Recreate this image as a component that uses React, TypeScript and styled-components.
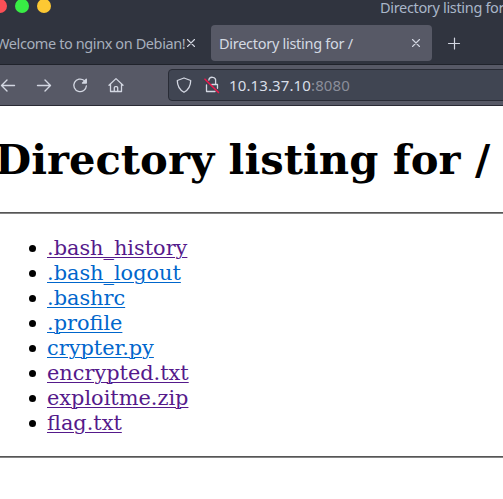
import React from "react";
import styled, { createGlobalStyle } from "styled-components";

const Global = createGlobalStyle`
  html, body { margin: 0; padding: 0; background: #fff; }
  body { overflow: hidden; }
  *, *::before, *::after { box-sizing: border-box; }
`;

const Window = styled.div`
  width: 503px;
  height: 499px;
  overflow: hidden;
  display: flex;
  flex-direction: column;
  background: #fff;
`;

const Chrome = styled.header`
  flex: none;
  font-family: "Noto Sans", sans-serif;
  font-size: 14.5px;
  letter-spacing: -0.33px;
  white-space: nowrap;
  color: #b0b8c6;
  background: #30343f;
`;

const TitleBar = styled.div`
  height: 25px;
  display: flex;
  align-items: flex-start;
`;

const Lights = styled.div`
  flex: none;
  display: flex;
  gap: 8px;
  width: 380px;
  margin-left: -7px;
  margin-right: 7px;
`;

const Light = styled.span<{ $color: string }>`
  width: 14px;
  height: 14px;
  margin-top: -1px;
  border-radius: 50%;
  background: ${(p) => p.$color};
`;

const WindowTitle = styled.span`
  line-height: 20px;
  margin-top: -3px;
  color: #a9b6c8;
`;

const TabStrip = styled.div`
  height: 40px;
  display: flex;
  align-items: flex-start;
  border-bottom: 1px solid #20232b;
`;

const Tab = styled.div<{ $active?: boolean }>`
  flex: none;
  width: ${(p) => (p.$active ? 221 : 211)}px;
  height: 36px;
  padding: ${(p) => (p.$active ? "0 10px 0 8px" : "0 14px 0 0")};
  display: flex;
  align-items: center;
  justify-content: space-between;
  border-radius: 4px;
  color: ${(p) => (p.$active ? "#d3dae3" : "#a7afbc")};
  background: ${(p) => (p.$active ? "#575966" : "transparent")};
`;

const TabLabel = styled.span<{ $shift?: number }>`
  line-height: 20px;
  margin-left: ${(p) => p.$shift ?? 0}px;
  letter-spacing: ${(p) => (p.$shift ? -0.4 : -0.28)}px;
`;

const NewTab = styled.span`
  height: 36px;
  padding-left: 15px;
  display: flex;
  align-items: center;
`;

const Toolbar = styled.div`
  height: 41px;
  display: flex;
  align-items: center;
  background: #575966;
  border-bottom: 1px solid #292a34;
`;

const NavButtons = styled.div`
  width: 168px;
  flex: none;
  display: flex;
  gap: 18px;
  margin-left: -1px;
  margin-right: 1px;
`;

const AddressBar = styled.div`
  width: 350px;
  height: 32px;
  flex: none;
  display: flex;
  align-items: center;
  padding-left: 6px;
  border: 1px solid #292c36;
  border-radius: 4px;
  background: #404552;
  color: #d8dee8;
  font-size: 15px;
  letter-spacing: 0.12px;
`;

const Address = styled.span`
  line-height: 20px;
  margin-left: 8px;
`;

const Port = styled.span`
  color: #8b8e9a;
`;

const Glyph = styled.svg<{ $gap?: number; $weight?: number }>`
  flex: none;
  display: block;
  margin-left: ${(p) => p.$gap ?? 0}px;
  fill: none;
  stroke: #d3d7e2;
  stroke-width: ${(p) => p.$weight ?? 1.4};
  stroke-linecap: round;
  stroke-linejoin: round;
`;

const Slash = styled.path`
  stroke: #ed174b;
  stroke-width: 1.6;
`;

const Page = styled.main`
  flex: 1;
  font-family: "DejaVu Serif", serif;
  font-size: 20.85px;
  color: #000;
`;

const Heading = styled.h1`
  margin: 29px 0 28px -5px;
  font-size: 41.7px;
  line-height: 49px;
  font-weight: 700;
  white-space: nowrap;
`;

const Rule = styled.hr`
  margin: 0;
  height: 2px;
  border: 0;
  background: linear-gradient(#555 50%, #858585 50%);
`;

const Listing = styled.ul`
  margin: 22px 0 20px;
  padding: 0 0 0 28px;
  list-style: none;
`;

const Entry = styled.li`
  height: 25px;
  line-height: 25px;
  display: flex;
  align-items: center;

  &::before {
    content: "";
    width: 7.5px;
    height: 7.5px;
    margin: 0 11px 0 0.5px;
    border-radius: 50%;
    background: #000;
  }
`;

const FileLink = styled.a<{ $visited: boolean }>`
  color: ${(p) => (p.$visited ? "#551a8b" : "#0066cc")};
  text-decoration: underline;
  text-decoration-thickness: 1px;
  text-underline-offset: 2px;
  text-decoration-skip-ink: auto;
`;

const files = [
  { name: ".bash_history", visited: true },
  { name: ".bash_logout", visited: false },
  { name: ".bashrc", visited: false },
  { name: ".profile", visited: false },
  { name: "crypter.py", visited: false },
  { name: "encrypted.txt", visited: true },
  { name: "exploitme.zip", visited: true },
  { name: "flag.txt", visited: true },
];

const Close = () => (
  <Glyph width="12" height="12" viewBox="0 0 12 12" $weight={1.1}>
    <path d="M2.5 2.5 9.5 9.5M9.5 2.5 2.5 9.5" />
  </Glyph>
);

export default function App() {
  return (
    <>
      <Global />
      <Window>
        <Chrome>
          <TitleBar>
            <Lights>
              <Light $color="#fc4f56" />
              <Light $color="#38ed45" />
              <Light $color="#fdc833" />
            </Lights>
            <WindowTitle>Directory listing for /</WindowTitle>
          </TitleBar>
          <TabStrip>
            <Tab>
              <TabLabel $shift={-4}>Welcome to nginx on Debian!</TabLabel>
              <Close />
            </Tab>
            <Tab $active>
              <TabLabel>Directory listing for /</TabLabel>
              <Close />
            </Tab>
            <NewTab>
              <Glyph width="14" height="14" viewBox="0 0 14 14" $weight={1.2}>
                <path d="M1.5 7.5h11M7.5 2v11" />
              </Glyph>
            </NewTab>
          </TabStrip>
          <Toolbar>
            <NavButtons>
              <Glyph width="18" height="18" viewBox="0 0 18 18">
                <path d="M15.5 9.5h-13M8 4 2.5 9.5 8 15" />
              </Glyph>
              <Glyph width="18" height="18" viewBox="0 0 18 18">
                <path d="M2.5 9.5h13M10 4l5.5 5.5L10 15" />
              </Glyph>
              <Glyph width="18" height="18" viewBox="0 0 18 18" $weight={1.3}>
                <path d="M13.2 4.6A6.3 6.3 0 1 0 15.4 9.8" />
                <path d="M15.3 3.2v3.9H11.4z" fill="#d3d7e2" />
              </Glyph>
              <Glyph width="18" height="18" viewBox="0 0 18 18" $weight={1.3}>
                <path d="M2 9.2 9 2.6l7 6.6M3.5 8.2v7.3h11V8.2M7.3 15.2v-3.5q0-1 1-1h1.4q1 0 1 1v3.5" />
              </Glyph>
            </NavButtons>
            <AddressBar>
              <Glyph width="18" height="18" viewBox="0 0 18 18" $weight={1.3}>
                <path d="M9 2 15.7 4.5C15.7 9.5 14 13.5 9 16.3 4 13.5 2.3 9.5 2.3 4.5Z" />
              </Glyph>
              <Glyph width="18" height="18" viewBox="0 0 18 18" $gap={10} $weight={1.3}>
                <path d="M5.8 4.2a3.4 3.4 0 0 1 6.8 1V8M8.8 8.5h5.7v3.8M3.5 9v6.5H12" />
                <Slash d="M2 3.2 15.5 16.5" />
              </Glyph>
              <Address>
                10.13.37.10<Port>:8080</Port>
              </Address>
            </AddressBar>
          </Toolbar>
        </Chrome>
        <Page>
          <Heading>Directory listing for /</Heading>
          <Rule />
          <Listing>
            {files.map((file) => (
              <Entry key={file.name}>
                <FileLink href="#" $visited={file.visited}>
                  {file.name}
                </FileLink>
              </Entry>
            ))}
          </Listing>
          <Rule />
        </Page>
      </Window>
    </>
  );
}
